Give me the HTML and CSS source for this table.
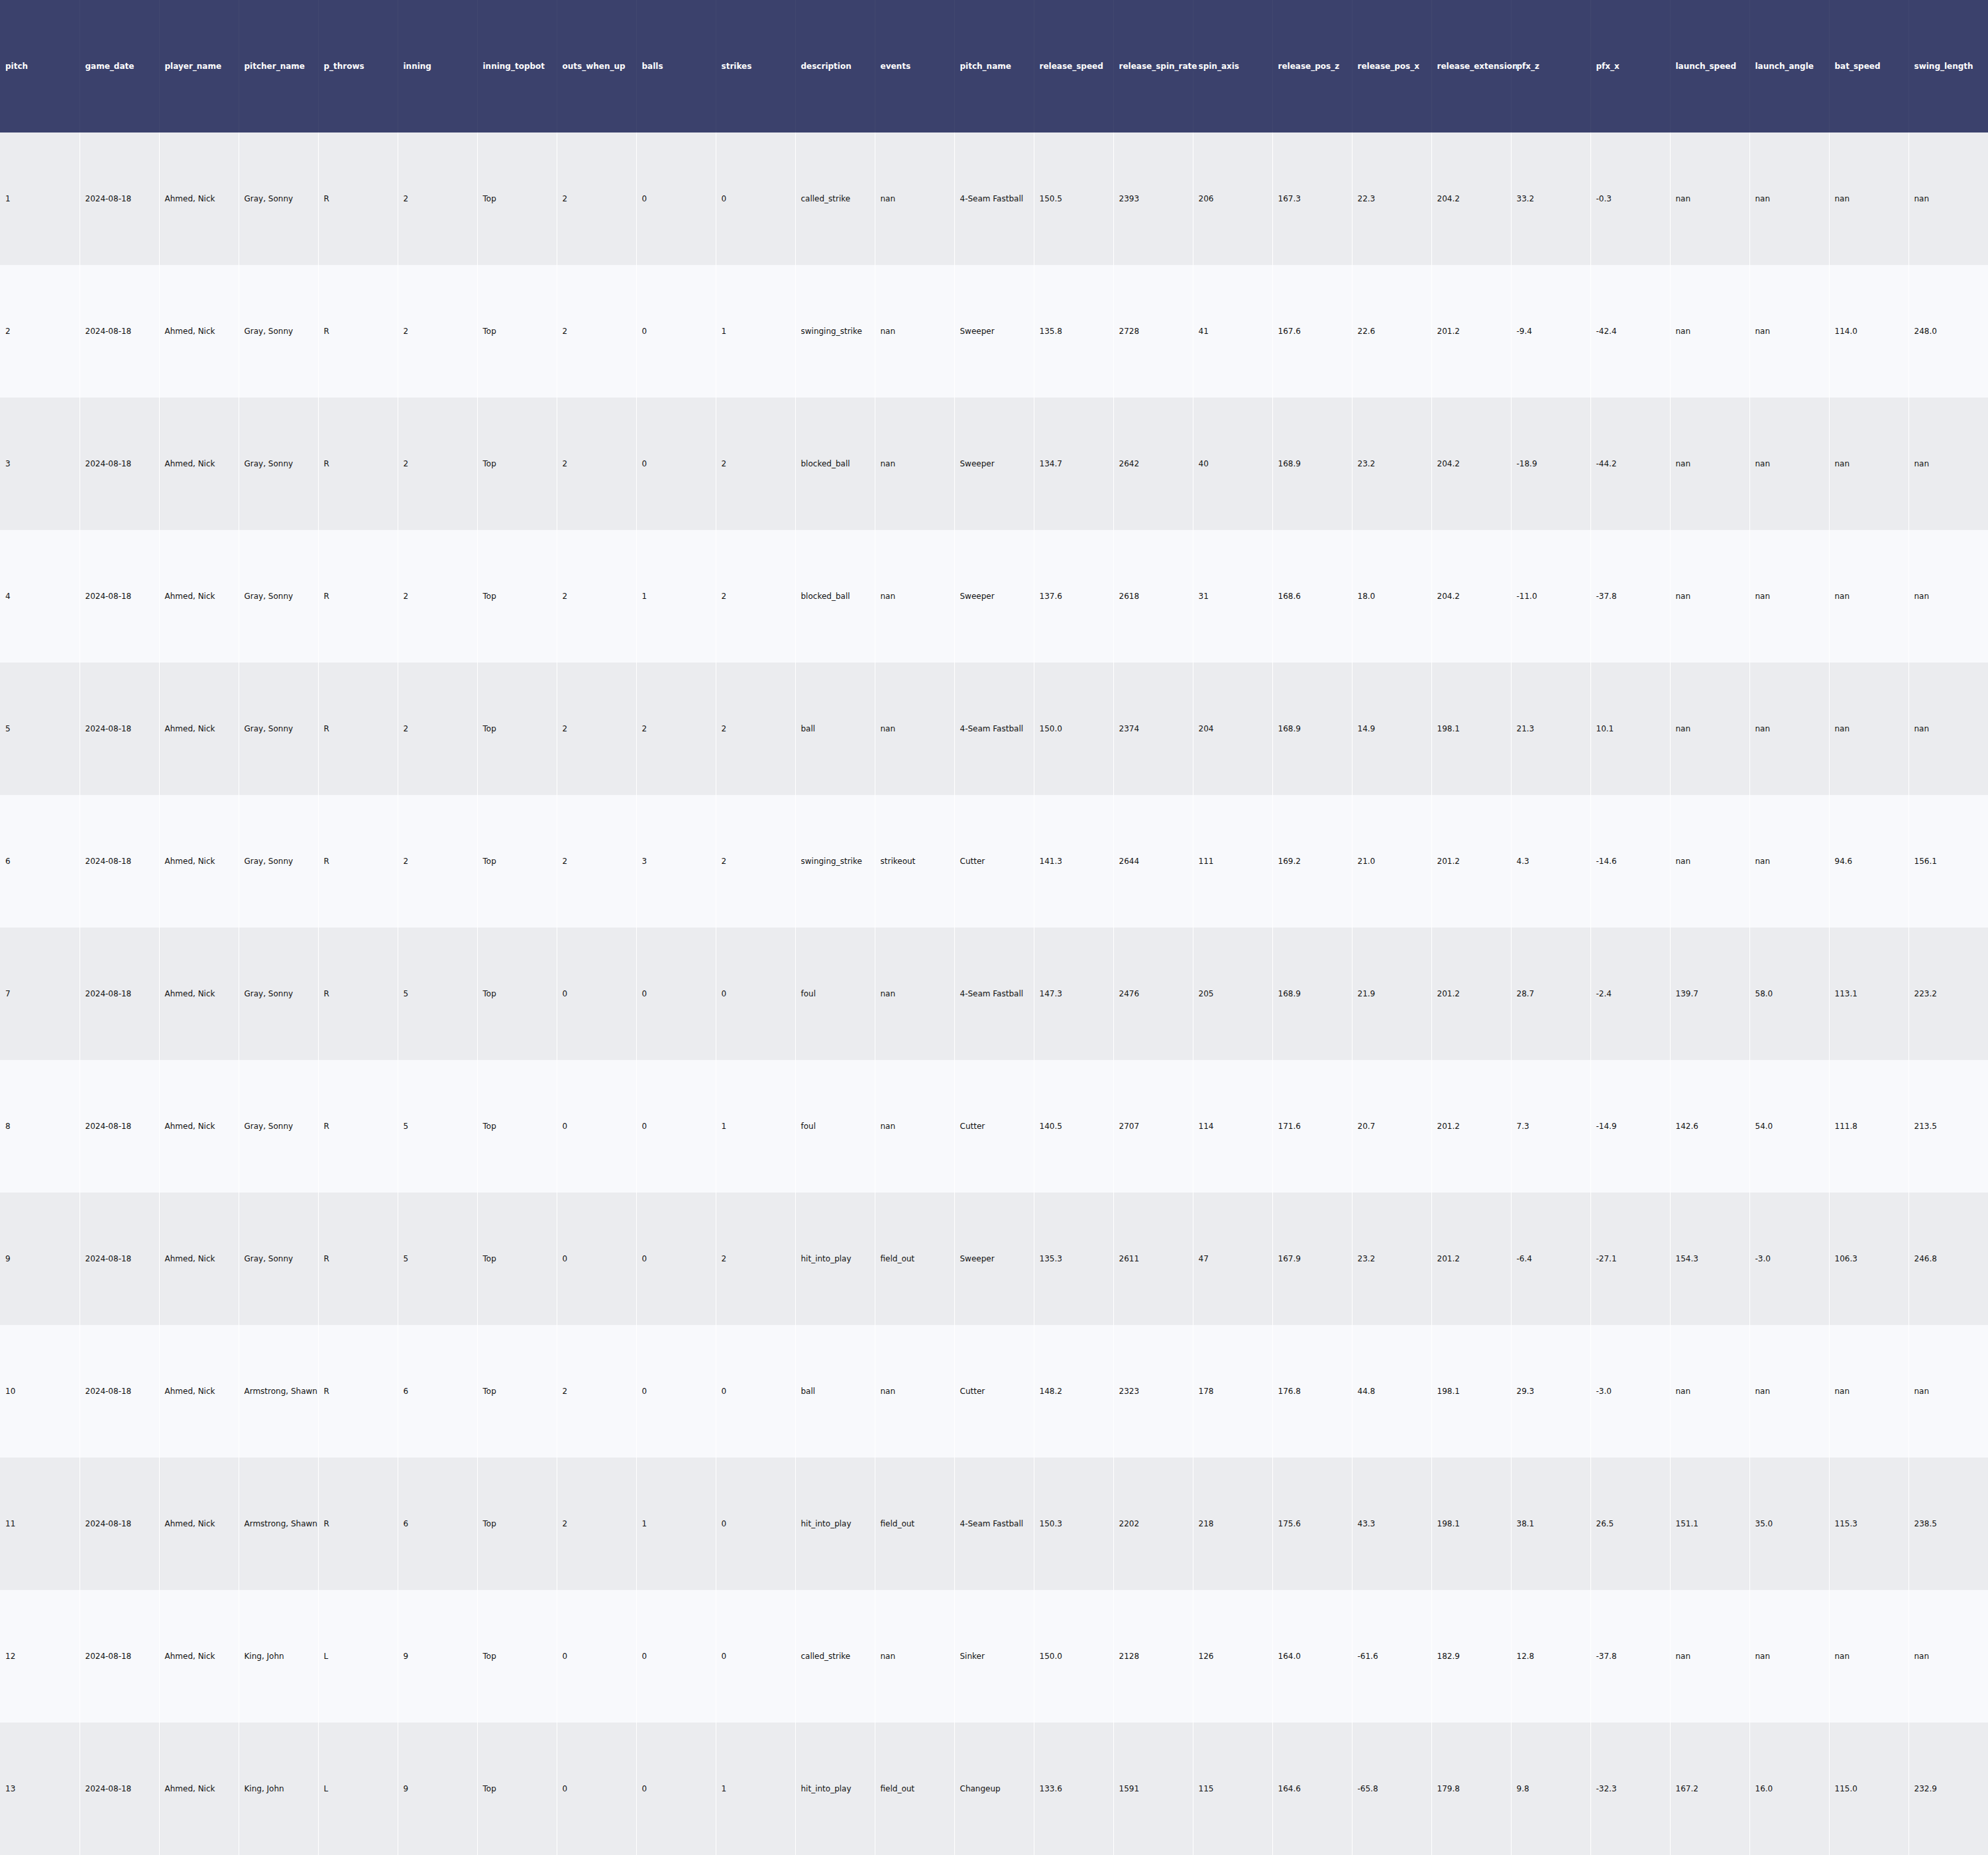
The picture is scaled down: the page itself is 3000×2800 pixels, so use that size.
FILE: index.html
```html
<!DOCTYPE html>
<html>
<head>
<meta charset="utf-8">
<link rel="stylesheet" href="styles.css">
</head>
<body>
<table class="grid">
<thead>
<tr class="head">
<th><span class="label">pitch</span></th><th><span class="label">game_date</span></th><th><span class="label">player_name</span></th><th><span class="label">pitcher_name</span></th><th><span class="label">p_throws</span></th><th><span class="label">inning</span></th><th><span class="label">inning_topbot</span></th><th><span class="label">outs_when_up</span></th><th><span class="label">balls</span></th><th><span class="label">strikes</span></th><th><span class="label">description</span></th><th><span class="label">events</span></th><th><span class="label">pitch_name</span></th><th><span class="label">release_speed</span></th><th><span class="label">release_spin_rate</span></th><th><span class="label">spin_axis</span></th><th><span class="label">release_pos_z</span></th><th><span class="label">release_pos_x</span></th><th><span class="label">release_extension</span></th><th><span class="label">pfx_z</span></th><th><span class="label">pfx_x</span></th><th><span class="label">launch_speed</span></th><th><span class="label">launch_angle</span></th><th><span class="label">bat_speed</span></th><th><span class="label">swing_length</span></th>
</tr>
</thead>
<tbody>
<tr><td>1</td><td>2024-08-18</td><td>Ahmed, Nick</td><td>Gray, Sonny</td><td>R</td><td>2</td><td>Top</td><td>2</td><td>0</td><td>0</td><td>called_strike</td><td>nan</td><td>4-Seam Fastball</td><td>150.5</td><td>2393</td><td>206</td><td>167.3</td><td>22.3</td><td>204.2</td><td>33.2</td><td>-0.3</td><td>nan</td><td>nan</td><td>nan</td><td>nan</td></tr>
<tr><td>2</td><td>2024-08-18</td><td>Ahmed, Nick</td><td>Gray, Sonny</td><td>R</td><td>2</td><td>Top</td><td>2</td><td>0</td><td>1</td><td>swinging_strike</td><td>nan</td><td>Sweeper</td><td>135.8</td><td>2728</td><td>41</td><td>167.6</td><td>22.6</td><td>201.2</td><td>-9.4</td><td>-42.4</td><td>nan</td><td>nan</td><td>114.0</td><td>248.0</td></tr>
<tr><td>3</td><td>2024-08-18</td><td>Ahmed, Nick</td><td>Gray, Sonny</td><td>R</td><td>2</td><td>Top</td><td>2</td><td>0</td><td>2</td><td>blocked_ball</td><td>nan</td><td>Sweeper</td><td>134.7</td><td>2642</td><td>40</td><td>168.9</td><td>23.2</td><td>204.2</td><td>-18.9</td><td>-44.2</td><td>nan</td><td>nan</td><td>nan</td><td>nan</td></tr>
<tr><td>4</td><td>2024-08-18</td><td>Ahmed, Nick</td><td>Gray, Sonny</td><td>R</td><td>2</td><td>Top</td><td>2</td><td>1</td><td>2</td><td>blocked_ball</td><td>nan</td><td>Sweeper</td><td>137.6</td><td>2618</td><td>31</td><td>168.6</td><td>18.0</td><td>204.2</td><td>-11.0</td><td>-37.8</td><td>nan</td><td>nan</td><td>nan</td><td>nan</td></tr>
<tr><td>5</td><td>2024-08-18</td><td>Ahmed, Nick</td><td>Gray, Sonny</td><td>R</td><td>2</td><td>Top</td><td>2</td><td>2</td><td>2</td><td>ball</td><td>nan</td><td>4-Seam Fastball</td><td>150.0</td><td>2374</td><td>204</td><td>168.9</td><td>14.9</td><td>198.1</td><td>21.3</td><td>10.1</td><td>nan</td><td>nan</td><td>nan</td><td>nan</td></tr>
<tr><td>6</td><td>2024-08-18</td><td>Ahmed, Nick</td><td>Gray, Sonny</td><td>R</td><td>2</td><td>Top</td><td>2</td><td>3</td><td>2</td><td>swinging_strike</td><td>strikeout</td><td>Cutter</td><td>141.3</td><td>2644</td><td>111</td><td>169.2</td><td>21.0</td><td>201.2</td><td>4.3</td><td>-14.6</td><td>nan</td><td>nan</td><td>94.6</td><td>156.1</td></tr>
<tr><td>7</td><td>2024-08-18</td><td>Ahmed, Nick</td><td>Gray, Sonny</td><td>R</td><td>5</td><td>Top</td><td>0</td><td>0</td><td>0</td><td>foul</td><td>nan</td><td>4-Seam Fastball</td><td>147.3</td><td>2476</td><td>205</td><td>168.9</td><td>21.9</td><td>201.2</td><td>28.7</td><td>-2.4</td><td>139.7</td><td>58.0</td><td>113.1</td><td>223.2</td></tr>
<tr><td>8</td><td>2024-08-18</td><td>Ahmed, Nick</td><td>Gray, Sonny</td><td>R</td><td>5</td><td>Top</td><td>0</td><td>0</td><td>1</td><td>foul</td><td>nan</td><td>Cutter</td><td>140.5</td><td>2707</td><td>114</td><td>171.6</td><td>20.7</td><td>201.2</td><td>7.3</td><td>-14.9</td><td>142.6</td><td>54.0</td><td>111.8</td><td>213.5</td></tr>
<tr><td>9</td><td>2024-08-18</td><td>Ahmed, Nick</td><td>Gray, Sonny</td><td>R</td><td>5</td><td>Top</td><td>0</td><td>0</td><td>2</td><td>hit_into_play</td><td>field_out</td><td>Sweeper</td><td>135.3</td><td>2611</td><td>47</td><td>167.9</td><td>23.2</td><td>201.2</td><td>-6.4</td><td>-27.1</td><td>154.3</td><td>-3.0</td><td>106.3</td><td>246.8</td></tr>
<tr><td>10</td><td>2024-08-18</td><td>Ahmed, Nick</td><td>Armstrong, Shawn</td><td>R</td><td>6</td><td>Top</td><td>2</td><td>0</td><td>0</td><td>ball</td><td>nan</td><td>Cutter</td><td>148.2</td><td>2323</td><td>178</td><td>176.8</td><td>44.8</td><td>198.1</td><td>29.3</td><td>-3.0</td><td>nan</td><td>nan</td><td>nan</td><td>nan</td></tr>
<tr><td>11</td><td>2024-08-18</td><td>Ahmed, Nick</td><td>Armstrong, Shawn</td><td>R</td><td>6</td><td>Top</td><td>2</td><td>1</td><td>0</td><td>hit_into_play</td><td>field_out</td><td>4-Seam Fastball</td><td>150.3</td><td>2202</td><td>218</td><td>175.6</td><td>43.3</td><td>198.1</td><td>38.1</td><td>26.5</td><td>151.1</td><td>35.0</td><td>115.3</td><td>238.5</td></tr>
<tr><td>12</td><td>2024-08-18</td><td>Ahmed, Nick</td><td>King, John</td><td>L</td><td>9</td><td>Top</td><td>0</td><td>0</td><td>0</td><td>called_strike</td><td>nan</td><td>Sinker</td><td>150.0</td><td>2128</td><td>126</td><td>164.0</td><td>-61.6</td><td>182.9</td><td>12.8</td><td>-37.8</td><td>nan</td><td>nan</td><td>nan</td><td>nan</td></tr>
<tr><td>13</td><td>2024-08-18</td><td>Ahmed, Nick</td><td>King, John</td><td>L</td><td>9</td><td>Top</td><td>0</td><td>0</td><td>1</td><td>hit_into_play</td><td>field_out</td><td>Changeup</td><td>133.6</td><td>1591</td><td>115</td><td>164.6</td><td>-65.8</td><td>179.8</td><td>9.8</td><td>-32.3</td><td>167.2</td><td>16.0</td><td>115.0</td><td>232.9</td></tr>
</tbody>
</table>
</body>
</html>
```
FILE: styles.css
```css
html, body {
  margin: 0;
  padding: 0;
  background: #ffffff;
}
.grid {
  width: 3000px;
  table-layout: fixed;
  border-collapse: collapse;
  border-spacing: 0;
  font-family: "DejaVu Sans", Verdana, sans-serif;
  font-size: 12px;
  color: #111111;
}
.grid th, .grid td {
  width: 120px;
  height: 200px;
  padding: 0 0 0 8px;
  box-sizing: border-box;
  text-align: left;
  vertical-align: middle;
  white-space: nowrap;
}
.grid th {
  background: #3b416c;
  color: #ffffff;
  font-weight: bold;
  border-right: 1px solid #41476f;
  overflow: visible;
}
.grid th .label {
  display: inline-block;
  background: #3b416c;
}
.grid td {
  overflow: hidden;
  border-right: 1px solid rgba(255, 255, 255, 0.45);
}
.grid tbody tr:nth-child(odd) td {
  background: #ebecef;
}
.grid tbody tr:nth-child(even) td {
  background: #f8f9fc;
}
```
